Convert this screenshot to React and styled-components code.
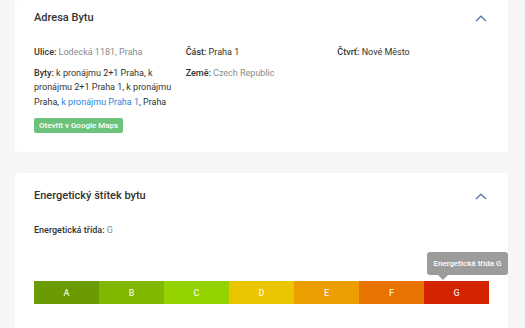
import React from 'react';
import styled, { createGlobalStyle } from 'styled-components';

const GlobalStyle = createGlobalStyle`
  html, body {
    margin: 0;
    padding: 0;
    background: #f6f6f6;
    font-family: Roboto, "Liberation Sans", sans-serif;
  }
`;

const classes = [
  { label: 'A', color: '#6b9b00' },
  { label: 'B', color: '#80b700' },
  { label: 'C', color: '#95d300' },
  { label: 'D', color: '#ebc500' },
  { label: 'E', color: '#ec9d00' },
  { label: 'F', color: '#e87300' },
  { label: 'G', color: '#d32300' },
];

const Chevron = () => (
  <ChevronIcon width="12" height="7" viewBox="0 0 12 7">
    <path d="M1 6 L6 1.2 L11 6" fill="none" stroke="#5b72a8" strokeWidth="1.3" />
  </ChevronIcon>
);

const App = () => {
  const current = 'G';
  return (
    <Page>
      <GlobalStyle />
      <Card $top={11} $bottom={19}>
        <CardHeader>
          <Title>Adresa Bytu</Title>
          <Chevron />
        </CardHeader>
        <InfoGrid>
          <Field>
            <Label>Ulice:</Label> <Value>Lodecká 1181, Praha</Value>
          </Field>
          <Field>
            <Label>Část:</Label> Praha 1
          </Field>
          <Field>
            <Label>Čtvrť:</Label> Nové Město
          </Field>
          <Field>
            <Label>Byty:</Label> k pronájmu 2+1 Praha, k pronájmu 2+1 Praha 1, k pronájmu Praha,{' '}
            <Link>k pronájmu Praha 1</Link>, Praha
          </Field>
          <Field>
            <Label>Země:</Label> <Value>Czech Republic</Value>
          </Field>
        </InfoGrid>
        <MapsButton>Otevřít v Google Maps</MapsButton>
      </Card>

      <Card $top={16} $bottom={40}>
        <CardHeader>
          <Title>Energetický štítek bytu</Title>
          <Chevron />
        </CardHeader>
        <ClassLine>
          <Label>Energetická třída:</Label> <Value>{current}</Value>
        </ClassLine>
        <Scale>
          {classes.map(c => (
            <Segment key={c.label} $color={c.color}>
              {c.label}
              {c.label === current && <Tooltip>Energetická třída {c.label}</Tooltip>}
            </Segment>
          ))}
        </Scale>
      </Card>
    </Page>
  );
};

const Page = styled.div`
  display: flex;
  flex-direction: column;
  gap: 21px;
  padding: 0 17px 0 15px;
  min-height: 328px;
  box-sizing: border-box;
`;

const Card = styled.section`
  background: #fff;
  padding: ${p => p.$top}px 19px ${p => p.$bottom}px;
  border-radius: 2px;
`;

const CardHeader = styled.div`
  display: flex;
  align-items: center;
  justify-content: space-between;
  height: 14px;
  padding-right: 1px;
`;

const Title = styled.h2`
  margin: 0;
  font-size: 11px;
  font-weight: 500;
  line-height: 14px;
  color: #333;
`;

const ChevronIcon = styled.svg`
  display: block;
  margin-right: 1px;
`;

const InfoGrid = styled.div`
  display: grid;
  grid-template-columns: repeat(3, 1fr);
  row-gap: 6px;
  margin-top: 20px;
  width: 455px;
`;

const Field = styled.div`
  padding-right: 12px;
  font-size: 9px;
  line-height: 14.5px;
  color: #333;
`;

const Label = styled.span`
  font-weight: 500;
  color: #333;
`;

const Value = styled.span`
  color: #8a8a8a;
`;

const Link = styled.span`
  color: #2b86e0;
`;

const MapsButton = styled.button`
  display: block;
  margin-top: 9px;
  height: 15px;
  padding: 0 5px;
  border: none;
  border-radius: 2px;
  background: #6cc27b;
  color: #fff;
  font-family: Roboto, "Liberation Sans", sans-serif;
  font-size: 8px;
  font-weight: 500;
  line-height: 15px;
`;

const ClassLine = styled.div`
  margin-top: 20px;
  font-size: 9px;
  line-height: 14px;
`;

const Scale = styled.div`
  display: grid;
  grid-template-columns: repeat(7, 1fr);
  width: 455px;
  margin-top: 44px;
  height: 23px;
`;

const Segment = styled.div`
  position: relative;
  display: flex;
  align-items: center;
  justify-content: center;
  background: ${p => p.$color};
  color: rgba(255, 255, 255, 0.85);
  font-size: 9px;
  font-weight: 500;
`;

const Tooltip = styled.div`
  position: absolute;
  left: 3px;
  bottom: 29px;
  width: 81px;
  height: 23px;
  box-sizing: border-box;
  display: flex;
  align-items: center;
  justify-content: center;
  background: #9c9c9c;
  border-radius: 3px;
  color: #fff;
  font-size: 8px;
  font-weight: 500;
  white-space: nowrap;

  &::after {
    content: '';
    position: absolute;
    left: 11px;
    top: 100%;
    border: 5px solid transparent;
    border-top-color: #9c9c9c;
  }
`;

export default App;
